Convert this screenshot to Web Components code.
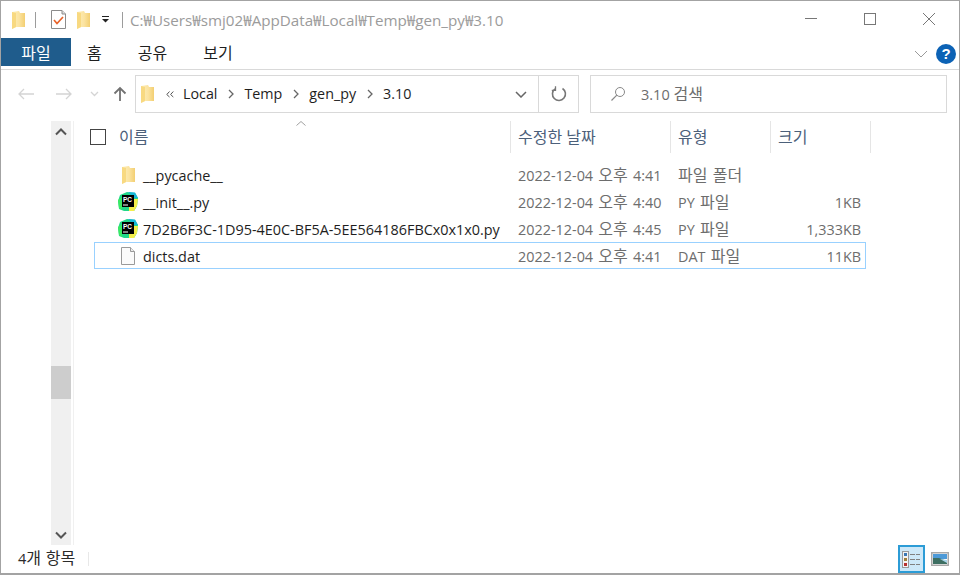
<!doctype html>
<html lang="ko">
<head>
<meta charset="utf-8">
<title>3.10</title>
<style>
  html, body { margin: 0; height: 100%; background: #fff; }
  body { font-family: "Open Sans", "Noto Sans CJK KR", sans-serif; font-size: 14.500px; color: #1e1e1e; }
</style>
</head>
<body>
<template id="folder-svg">
  <svg width="13" height="18" viewBox="0 0 13 18">
    <defs><linearGradient id="fg" x1="0" x2="1" y1="0" y2="0"><stop offset="0" stop-color="#fdeeb8"/><stop offset=".55" stop-color="#fbe3a0"/><stop offset="1" stop-color="#f3cf72"/></linearGradient></defs>
    <path d="M0 1 L7 0 L8 2 L13 2 L13 16 L4 16 L0 18 Z" fill="url(#fg)"/>
    <path d="M0 1 L4 2 L4 16 L0 18 Z" fill="#f8d981"/>
  </svg>
</template>
<template id="pycharm-svg">
  <svg width="20" height="20" viewBox="0 0 20 20">
    <path d="M2 3 L9 0 L17 1 L20 6 L19 14 L16 19 L6 19 L1 17 L0 9 Z" fill="#21d789"/>
    <path d="M10 0 L17 .5 L20 6 L16 6 L13 3 Z" fill="#19b5d6"/>
    <path d="M16 7 L20 7 L19 14 L16 19 L11 19 L11 15 L16 15 Z" fill="#f4ee4a"/>
    <path d="M0 8 L4 5 L4 18 L1 16 Z" fill="#3bea62"/>
    <rect x="4" y="3" width="12" height="12" fill="#000"/>
    <rect x="5" y="12.500" width="5" height="1" fill="#fff"/>
    <text x="5" y="9.800" font-family="Liberation Sans, sans-serif" font-size="6.500" font-weight="700" fill="#fff">PC</text>
  </svg>
</template>
<template id="file-svg">
  <svg width="14" height="18" viewBox="0 0 14 18">
    <path d="M.5.500 H9.500 L13.500 4.500 V17.500 H.5 Z" fill="#fbfbfb" stroke="#9a9a9a"/>
    <path d="M9.500.500 V4.500 H13.500" fill="#ececec" stroke="#9a9a9a"/>
  </svg>
</template>

<explorer-window>
  <title-bar path="C:₩Users₩smj02₩AppData₩Local₩Temp₩gen_py₩3.10"></title-bar>
  <ribbon-tabs></ribbon-tabs>
  <address-row></address-row>
  <main-pane>
    <file-row slot="rows" icon="folder" name="__pycache__" date="2022-12-04 오후 4:41" type="파일 폴더" size=""></file-row>
    <file-row slot="rows" icon="pycharm" name="__init__.py" date="2022-12-04 오후 4:40" type="PY 파일" size="1KB"></file-row>
    <file-row slot="rows" icon="pycharm" name="7D2B6F3C-1D95-4E0C-BF5A-5EE564186FBCx0x1x0.py" date="2022-12-04 오후 4:45" type="PY 파일" size="1,333KB"></file-row>
    <file-row slot="rows" icon="file" name="dicts.dat" date="2022-12-04 오후 4:41" type="DAT 파일" size="11KB" selected></file-row>
  </main-pane>
  <status-bar></status-bar>
</explorer-window>

<script>
const useIcon = (name) => document.getElementById(name + '-svg').innerHTML
// hangul is drawn larger than latin in the original, so runs get their own size
const ko = (text) => text.replace(/[가-힣]+/g, '<span class="k">$&</span>')
const koStyle = `.k { font-size: 16px; line-height: 1; }`

class ExplorerWindow extends HTMLElement {
  constructor() {
    super()
    this.attachShadow({ mode: 'open' })
    this.shadowRoot.innerHTML = `
      <style>
        :host {
          display: flex;
          flex-direction: column;
          box-sizing: border-box;
          width: 960px;
          height: 575px;
          border: 1px solid #a3a3a3;
          border-bottom-width: 2px;
          overflow: hidden;
          background: #fff;
        }
      </style>
      <slot></slot>
    `
  }
}

class TitleBar extends HTMLElement {
  constructor() {
    super()
    this.attachShadow({ mode: 'open' })
    this.shadowRoot.innerHTML = `
      <style>
        :host { display: flex; align-items: center; height: 37px; flex: none; padding-left: 11px; }
        .sep { width: 1px; height: 16px; background: #9c9c9c; }
        .qa { display: flex; align-items: center; }
        .path { font-size: 15.200px; color: #9b9b9b; margin-left: 7px; white-space: nowrap; position: relative; top: -1px; }
        .caption { margin-left: auto; display: flex; height: 100%; align-items: flex-start; }
        .caption div { width: 59px; box-sizing: border-box; padding: 12px 0 0 23px; display: flex; }
      </style>
      <div class="qa">
        ${useIcon('folder')}
        <div class="sep" style="margin: 0 15px 0 10px"></div>
        <svg width="15" height="19" viewBox="0 0 15 19" style="margin-right:11px">
          <path d="M.5.500 H11 L14.500 4 V18.500 H.5 Z" fill="#fff" stroke="#8c8c8c"/>
          <path d="M11 .500 V4 H14.500" fill="#ddd" stroke="#8c8c8c"/>
          <path d="M3 10 L6 13.500 L12 7" fill="none" stroke="#e8632a" stroke-width="1.700"/>
        </svg>
        ${useIcon('folder')}
        <svg width="9" height="7" viewBox="0 0 9 7" style="margin: 0 12px 0 11px">
          <rect x="1" y="0" width="7" height="1" fill="#222"/>
          <path d="M1 3 H8 L4.500 6.500 Z" fill="#222"/>
        </svg>
        <div class="sep"></div>
      </div>
      <span class="path">${this.getAttribute('path')}</span>
      <div class="caption">
        <div><svg width="12" height="12"><rect y="5" width="12" height="1" fill="#777"/></svg></div>
        <div><svg width="12" height="12"><rect x=".5" y=".5" width="11" height="11" fill="none" stroke="#777"/></svg></div>
        <div><svg width="12" height="12"><path d="M0 0 L12 12 M12 0 L0 12" stroke="#777"/></svg></div>
      </div>
    `
  }
}

class RibbonTabs extends HTMLElement {
  constructor() {
    super()
    this.attachShadow({ mode: 'open' })
    this.shadowRoot.innerHTML = `
      <style>
        :host {
          display: flex; align-items: flex-start; flex: none; height: 31px;
          border-bottom: 1px solid #d9d9d9;
        }
        .tab { height: 28px; display: flex; align-items: center; justify-content: center; font-size: 16px; color: #1f1f1f; }
        .file { width: 70px; background: #1f5c8c; color: #fff; }
        .right { margin-left: auto; display: flex; align-items: center; gap: 8px; height: 28px; padding: 2px 3px 0 0; }
        .help {
          width: 20px; height: 20px; border-radius: 50%; background: #0c62b5; color: #fff;
          font: bold 15px/20px "Liberation Sans", sans-serif; text-align: center;
        }
      </style>
      <div class="tab file">파일</div>
      <div class="tab" style="margin-left:16px">홈</div>
      <div class="tab" style="margin-left:36px">공유</div>
      <div class="tab" style="margin-left:36px">보기</div>
      <div class="right">
        <svg width="14" height="8" viewBox="0 0 14 8"><path d="M1 1 L7 7 L13 1" fill="none" stroke="#9a9a9a"/></svg>
        <div class="help">?</div>
      </div>
    `
  }
}

class AddressRow extends HTMLElement {
  constructor() {
    super()
    this.attachShadow({ mode: 'open' })
    const chev = `<svg class="chev" width="6" height="10" viewBox="0 0 6 10"><path d="M1 1 L5 5 L1 9" fill="none" stroke="#666" stroke-width="1.300"/></svg>`
    this.shadowRoot.innerHTML = `
      <style>
        ${koStyle}
        :host { display: flex; align-items: center; flex: none; height: 48px; box-sizing: border-box; }
        .nav { width: 134px; display: flex; align-items: center; flex: none; padding-left: 16px; box-sizing: border-box; }
        .box { box-sizing: border-box; height: 38px; border: 1px solid #d9d9d9; display: flex; align-items: center; }
        .addr { width: 444px; font-size: 14.300px; color: #1e1e1e; }
        .addr span { white-space: nowrap; position: relative; top: -1px; }
        .chev { margin: 0 10px 0 11px; }
        .refresh { width: 39px; height: 100%; border-left: 1px solid #d9d9d9; display: flex; align-items: center; justify-content: center; }
        .search { width: 357px; margin-left: 11px; font-size: 14.500px; color: #6d6d6d; }
      </style>
      <div class="nav">
        <svg width="18" height="14" viewBox="0 0 18 14"><path d="M17 7 H2 M7 2 L2 7 L7 12" fill="none" stroke="#d4d4d4" stroke-width="1.300"/></svg>
        <svg width="18" height="14" viewBox="0 0 18 14" style="margin-left:20px"><path d="M1 7 H16 M11 2 L16 7 L11 12" fill="none" stroke="#d4d4d4" stroke-width="1.300"/></svg>
        <svg width="9" height="6" viewBox="0 0 9 6" style="margin-left:17px"><path d="M1 1 L4.500 4.500 L8 1" fill="none" stroke="#d4d4d4" stroke-width="1.300"/></svg>
        <svg width="14" height="16" viewBox="0 0 14 16" style="margin-left:14px"><path d="M7 15 V2 M1.500 7.500 L7 2 L12.500 7.500" fill="none" stroke="#727272" stroke-width="1.800"/></svg>
      </div>
      <div class="box addr">
        <span style="display:flex;margin-left:5px;top:0">${useIcon('folder')}</span>
        <svg width="8" height="7" viewBox="0 0 8 7" style="margin:0 9px 0 12px"><path d="M3.500 .500 L.8 3.500 L3.500 6 M7.300 .500 L4.600 3.500 L7.300 6" fill="none" stroke="#555"/></svg>
        <span>Local</span>${chev}<span>Temp</span>${chev}<span>gen_py</span>${chev}<span>3.10</span>
        <svg width="12" height="7" viewBox="0 0 12 7" style="margin-left:auto;margin-right:11px"><path d="M1 1 L6 6 L11 1" fill="none" stroke="#666" stroke-width="1.500"/></svg>
        <div class="refresh">
          <svg width="16" height="16" viewBox="0 0 16 16"><path d="M11.500 2.500 A6.500 6.500 0 1 1 4 2.800" fill="none" stroke="#777" stroke-width="1.600"/><path d="M4.500 .500 V4.500 H.8" fill="none" stroke="#777" stroke-width="1.300" transform="translate(0 -.2)"/></svg>
        </div>
      </div>
      <div class="box search">
        <svg width="16" height="16" viewBox="0 0 16 16" style="margin:0 15px 0 19px"><circle cx="10" cy="6" r="4.500" fill="none" stroke="#888"/><path d="M6.800 9.200 L1.500 14.500" stroke="#888" stroke-width="1.200"/></svg>
        <span>${ko('3.10 검색')}</span>
      </div>
    `
  }
}

class MainPane extends HTMLElement {
  constructor() {
    super()
    this.attachShadow({ mode: 'open' })
    this.shadowRoot.innerHTML = `
      <style>
        :host { display: flex; flex: 1; min-height: 0; padding-top: 3px; }
        .left { width: 50px; flex: none; }
        .content { flex: 1; min-width: 0; border-left: 1px solid #f0f0f0; margin-left: 2px; }
        .head { position: relative; display: grid; grid-template-columns: 422px 160px 100px 100px; height: 32px; margin-left: 15px; font-size: 16px; color: #4c607a; }
        .cell { display: flex; align-items: center; border-right: 1px solid #e5e5e5; padding: 0 0 2px 7px; box-sizing: border-box; }
        .name { padding-left: 30px; }
        .check { position: absolute; left: 1px; top: 8px; width: 14px; height: 14px; border: 1px solid #444; }
        .sort { position: absolute; left: 207px; top: 0; }
        .rows { margin: 8px 0 0 20px; width: 772px; display: flex; flex-direction: column; }
      </style>
      <div class="left"></div>
      <scroll-track></scroll-track>
      <div class="content">
        <div class="head">
          <span class="check"></span>
          <svg class="sort" width="10" height="5" viewBox="0 0 10 5"><path d="M.5 4.500 L5 .5 L9.500 4.500" fill="none" stroke="#a0a0a0"/></svg>
          <div class="cell name">이름</div>
          <div class="cell">수정한 날짜</div>
          <div class="cell">유형</div>
          <div class="cell">크기</div>
        </div>
        <div class="rows"><slot name="rows"></slot></div>
      </div>
    `
  }
}

class ScrollTrack extends HTMLElement {
  constructor() {
    super()
    this.attachShadow({ mode: 'open' })
    this.shadowRoot.innerHTML = `
      <style>
        :host { display: flex; flex-direction: column; align-items: center; width: 20px; flex: none; background: #f0f0f0; height: 424px; }
        .btn { height: 21px; flex: none; display: flex; align-items: center; justify-content: center; }
        .thumb { width: 100%; height: 33px; background: #cdcdcd; margin-top: 224px; flex: none; }
        .end { margin-top: auto; }
      </style>
      <div class="btn"><svg width="12" height="8" viewBox="0 0 12 8"><path d="M1 6.500 L6 1.500 L11 6.500" fill="none" stroke="#555" stroke-width="2"/></svg></div>
      <div class="thumb"></div>
      <div class="btn end"><svg width="12" height="8" viewBox="0 0 12 8"><path d="M1 1.500 L6 6.500 L11 1.500" fill="none" stroke="#555" stroke-width="2"/></svg></div>
    `
  }
}

class FileRow extends HTMLElement {
  constructor() {
    super()
    this.attachShadow({ mode: 'open' })
    const attr = (n) => this.getAttribute(n)
    this.shadowRoot.innerHTML = `
      <style>
        ${koStyle}
        :host {
          display: grid; grid-template-columns: 416px 160px 100px 1fr; align-items: center;
          box-sizing: border-box; height: 27px; border: 1px solid transparent; font-size: 14.400px;
        }
        :host([selected]) { border-color: #99d1ff; }
        .n { display: flex; align-items: center; white-space: nowrap; color: #1e1e1e; padding-top: 1px; }
        .ic { width: 22px; margin: -1px 4px 0 22px; display: flex; justify-content: center; flex: none; }
        .d { color: #6d6d6d; padding: 2px 0 0 7px; white-space: nowrap; word-spacing: 1.500px; }
        .s { color: #6d6d6d; text-align: right; padding: 2px 4px 0 0; }
      </style>
      <div class="n"><span class="ic">${useIcon(attr('icon'))}</span>${attr('name')}</div>
      <div class="d">${ko(attr('date'))}</div>
      <div class="d">${ko(attr('type'))}</div>
      <div class="s">${attr('size')}</div>
    `
  }
}

class StatusBar extends HTMLElement {
  constructor() {
    super()
    this.attachShadow({ mode: 'open' })
    this.shadowRoot.innerHTML = `
      <style>
        ${koStyle}
        :host { display: flex; align-items: center; flex: none; height: 28px; padding-left: 17px; font-size: 14.500px; color: #2b2b2b; }
        .sep { width: 1px; height: 14px; background: #e8e8e8; margin-left: 13px; }
        .label { position: relative; top: -1px; word-spacing: 1px; }
        .views { margin-left: auto; display: flex; align-items: center; padding-right: 10px; gap: 6px; height: 100%; }
        .on { box-sizing: border-box; width: 27px; height: 28px; border: 2px solid #2c9cd6; background: #cde8f8; display: flex; align-items: center; justify-content: center; }
      </style>
      <span class="label">${ko('4개 항목')}</span>
      <div class="sep"></div>
      <div class="views">
        <div class="on">
          <svg width="19" height="17" viewBox="0 0 19 17">
            <rect x=".5" y=".5" width="6" height="16" fill="#f4f4f4" stroke="#9a9a9a"/>
            <rect x="2" y="2" width="3" height="3" fill="#3a79b5"/>
            <rect x="2" y="7" width="3" height="3" fill="#a0803c"/>
            <rect x="2" y="12" width="3" height="3" fill="#b53030"/>
            <path d="M8 3.500 H13 M14 3.500 H18 M8 8.500 H13 M14 8.500 H18 M8 13.500 H13 M14 13.500 H18" stroke="#808080"/>
          </svg>
        </div>
        <svg width="18" height="14" viewBox="0 0 18 14">
          <rect x=".75" y=".75" width="16.500" height="12.500" fill="#fff" stroke="#a8a8a8" stroke-width="1.500"/>
          <rect x="2" y="2" width="14" height="5" fill="#4d9ad8"/>
          <path d="M2 6 L8 6 L16 9 V12 H2 Z" fill="#3e6f62"/>
          <path d="M9 7 L16 8 V11 Z" fill="#a9d5ea"/>
        </svg>
      </div>
    `
  }
}

customElements.define('explorer-window', ExplorerWindow)
customElements.define('title-bar', TitleBar)
customElements.define('ribbon-tabs', RibbonTabs)
customElements.define('address-row', AddressRow)
customElements.define('main-pane', MainPane)
customElements.define('scroll-track', ScrollTrack)
customElements.define('file-row', FileRow)
customElements.define('status-bar', StatusBar)
</script>
</body>
</html>
